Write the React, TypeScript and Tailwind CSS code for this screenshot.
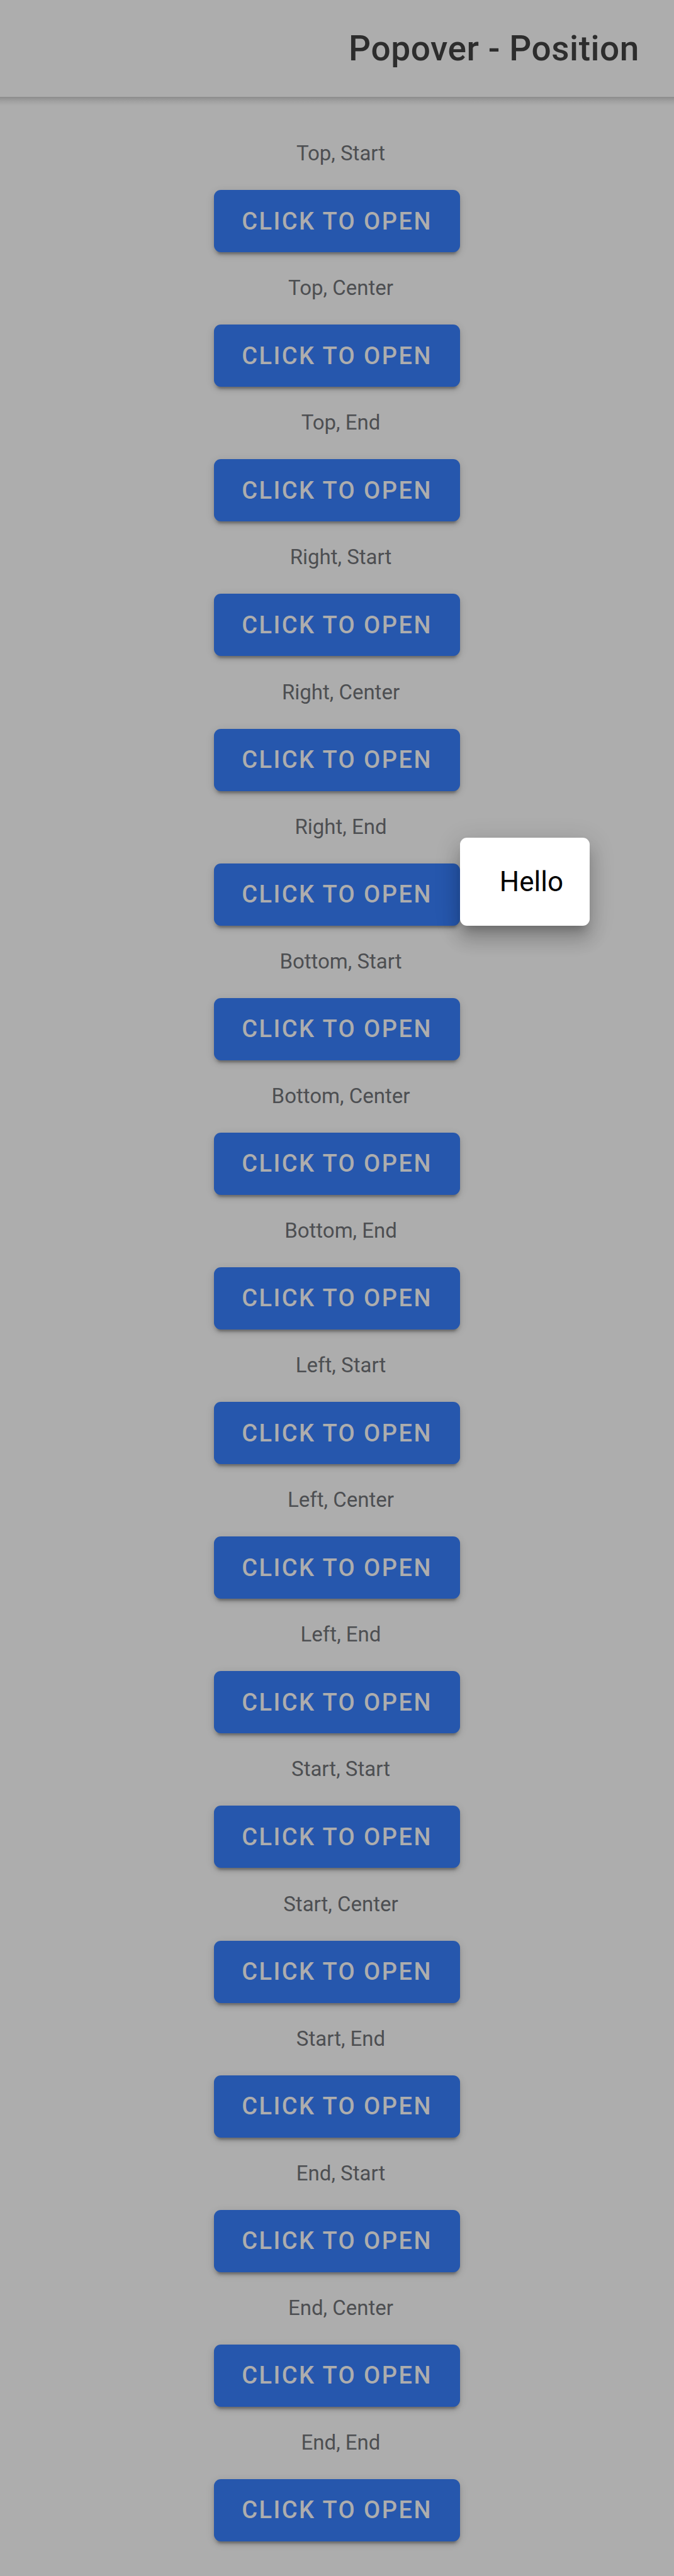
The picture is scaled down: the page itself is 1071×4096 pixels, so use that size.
const positions = [
  'Top, Start',
  'Top, Center',
  'Top, End',
  'Right, Start',
  'Right, Center',
  'Right, End',
  'Bottom, Start',
  'Bottom, Center',
  'Bottom, End',
  'Left, Start',
  'Left, Center',
  'Left, End',
  'Start, Start',
  'Start, Center',
  'Start, End',
  'End, Start',
  'End, Center',
  'End, End',
];

const openPosition = 'Right, End';

function Popover() {
  return (
    <div
      role="dialog"
      aria-label="Popover"
      className="absolute bottom-0 left-full z-10 rounded-[11px] bg-white py-11 pr-[42px] pl-[63px] text-[44px] leading-[52px] text-black shadow-[0_14px_14px_-8px_rgba(0,0,0,0.2),0_22px_27px_3px_rgba(0,0,0,0.14),0_8px_38px_5px_rgba(0,0,0,0.12)]"
    >
      Hello
    </div>
  );
}

function PositionItem({ label, open }: { label: string; open: boolean }) {
  const id = label.toLowerCase().replace(', ', '-');
  return (
    <li className="flex flex-1 flex-col items-center justify-end pb-4">
      <p id={id} className="mb-[38px] pl-3 text-[33px] leading-10 text-[#4d4f52]">
        {label}
      </p>
      <div className="relative">
        <button
          type="button"
          aria-describedby={id}
          aria-expanded={open}
          className="block h-[99px] rounded-[11px] bg-[#2657ad] px-11 text-[38px] leading-[44px] font-medium tracking-[0.065em] text-[#adadad] uppercase shadow-[0_8px_3px_-5px_rgba(0,0,0,0.2),0_5px_5px_0_rgba(0,0,0,0.14),0_3px_14px_0_rgba(0,0,0,0.12)]"
        >
          Click to open
        </button>
        {open && <Popover />}
      </div>
    </li>
  );
}

export default function App() {
  return (
    <div className="flex min-h-screen flex-col bg-[#adadad] font-['Roboto',sans-serif]">
      <header className="flex h-[154px] items-center justify-end px-[55px]">
        <h1 className="text-[55px] leading-[64px] font-medium tracking-[0.01em] text-[#2d2d2d]">
          Popover - Position
        </h1>
      </header>
      <div className="h-[14px] bg-linear-to-b from-[#8c8c8c] via-[#a1a1a1] to-[#adadad]" />
      <main className="flex flex-1 flex-col pt-[35px] pb-[39px]">
        <ul className="flex flex-1 flex-col">
          {positions.map((label) => (
            <PositionItem key={label} label={label} open={label === openPosition} />
          ))}
        </ul>
      </main>
    </div>
  );
}
